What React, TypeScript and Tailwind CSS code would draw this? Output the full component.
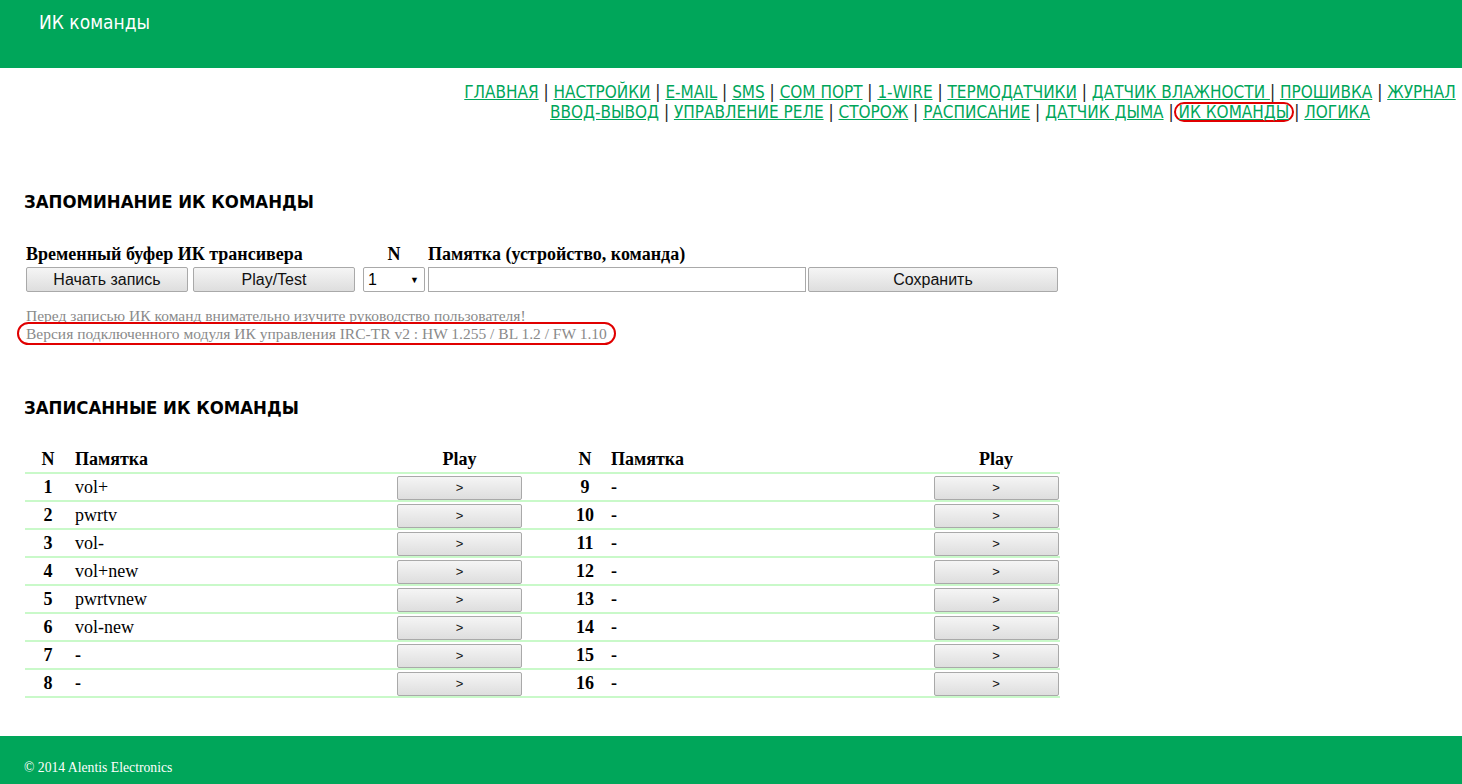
import React from "react";

const GREEN = "bg-[#00a65a]";

const navLine1 = [
  "ГЛАВНАЯ",
  "НАСТРОЙКИ",
  "E-MAIL",
  "SMS",
  "COM ПОРТ",
  "1-WIRE",
  "ТЕРМОДАТЧИКИ",
  "ДАТЧИК ВЛАЖНОСТИ ",
  "ПРОШИВКА",
  "ЖУРНАЛ",
];

const navLine2 = [
  "ВВОД-ВЫВОД",
  "УПРАВЛЕНИЕ РЕЛЕ",
  "СТОРОЖ",
  "РАСПИСАНИЕ",
  "ДАТЧИК ДЫМА",
  "ИК КОМАНДЫ",
  "ЛОГИКА",
];

const commands = ["vol+", "pwrtv", "vol-", "vol+new", "pwrtvnew", "vol-new", "-", "-"];

const tahoma = {
  fontFamily: '"DejaVu Sans Condensed", "DejaVu Sans", sans-serif',
  fontStretch: "condensed",
};

const NavLink = ({ label, circled }: { label: string; circled?: boolean }) => {
  const link = (
    <a href="#" className="text-[#00a65a] underline">
      {label}
    </a>
  );
  if (circled) {
    return (
      <span className="inline-block rounded-full border-2 border-[#e00000] px-[3px] leading-[16px]">
        {link}
      </span>
    );
  }
  return link;
};

const GrayButton = ({
  children,
  className = "",
}: {
  children: React.ReactNode;
  className?: string;
}) => (
  <button
    className={`rounded-[2px] border border-[#a9a9a9] bg-gradient-to-b from-[#f5f5f5] to-[#dedede] text-[#111] font-['Liberation_Sans',Arial,sans-serif] ${className}`}
  >
    {children}
  </button>
);

const Row = ({
  left,
  right,
  head,
}: {
  left: [string, string];
  right: [string, string];
  head?: boolean;
}) => {
  const cell = head ? "font-bold" : "";
  const play = head ? (
    <div className="flex items-center justify-center font-bold">Play</div>
  ) : (
    <div className="flex items-center justify-center">
      <GrayButton className="h-[24px] w-[125px] text-[13px]">&gt;</GrayButton>
    </div>
  );
  return (
    <div className="grid h-[28px] grid-cols-[46px_324px_129px_36px_50px_322px_128px] items-stretch border-b-2 border-[#c9f9c9]">
      <div className="flex items-center justify-center font-bold">{left[0]}</div>
      <div className={`flex items-center pl-[4px] ${cell} ${left[1] === "-" ? "font-bold" : ""}`}>
        {left[1]}
      </div>
      {play}
      <div />
      <div className="flex items-center justify-center font-bold">{right[0]}</div>
      <div className={`flex items-center pl-[1px] ${cell} ${right[1] === "-" ? "font-bold" : ""}`}>
        {right[1]}
      </div>
      {play}
    </div>
  );
};

export default function App() {
  return (
    <div className="min-h-[784px] bg-white font-['Liberation_Serif','Times_New_Roman',serif] text-[18px] text-black">
      <header className={`${GREEN} h-[68px] pl-[39px] pt-[8px]`}>
        <h1 className="text-[19px] leading-[28px] text-white" style={tahoma}>
          ИК команды
        </h1>
      </header>

      <nav className="flex justify-end pt-[14px]">
        <div className="w-[1004px] text-center text-[17px] leading-[20px] text-[#222]" style={tahoma}>
          <div>
            {navLine1.map((l, i) => (
              <React.Fragment key={l}>
                <NavLink label={l} />
                {i < navLine1.length - 1 && <span> | </span>}
              </React.Fragment>
            ))}
          </div>
          <div>
            {navLine2.map((l, i) => (
              <React.Fragment key={l}>
                <NavLink label={l} circled={l === "ИК КОМАНДЫ"} />
                {i < navLine2.length - 1 && (
                  <span>{l === "ДАТЧИК ДЫМА" ? " |" : l === "ИК КОМАНДЫ" ? "| " : " | "}</span>
                )}
              </React.Fragment>
            ))}
          </div>
        </div>
      </nav>

      <main className="pl-[24px]">
        <h2 className="mt-[70px] text-[18.4px] font-bold leading-[20px]" style={tahoma}>
          ЗАПОМИНАНИЕ ИК КОМАНДЫ
        </h2>

        <div className="mt-[32px] flex pl-[2px] text-[18px] font-bold leading-[20px]">
          <div className="w-[337px]">Временный буфер ИК трансивера</div>
          <div className="w-[62px] text-center">N</div>
          <div className="ml-[3px]">Памятка (устройство, команда)</div>
        </div>

        <div className="mt-[3px] flex h-[25px] items-stretch pl-[2px]">
          <GrayButton className="w-[162px] text-[16px]">Начать запись</GrayButton>
          <GrayButton className="ml-[5px] w-[162px] text-[16px]">Play/Test</GrayButton>
          <div className="ml-[8px] flex w-[62px] items-center justify-between rounded-[2px] border border-[#a9a9a9] bg-white pl-[4px] pr-[5px] font-['Liberation_Sans',Arial,sans-serif]">
            <span className="text-[16px] leading-[18px]">1</span>
            <span className="text-[9px] leading-[10px]">▼</span>
          </div>
          <input className="ml-[3px] w-[378px] border border-[#a9a9a9] bg-white outline-none" />
          <GrayButton className="ml-[2px] w-[250px] text-[16px]">Сохранить</GrayButton>
        </div>

        <div className="mt-[15px] text-[15.5px] leading-[17px] text-[#8a8a8a]">
          <div className="pl-[2px]">Перед записью ИК команд внимательно изучите руководство пользователя!</div>
          <div className="-ml-[7px] -mt-[2px]">
            <span className="inline-block rounded-full border-2 border-[#e00000] px-[7px] py-[1px] leading-[17px]">
              Версия подключенного модуля ИК управления IRC-TR v2 : HW 1.255 / BL 1.2 / FW 1.10
            </span>
          </div>
        </div>

        <h2 className="mt-[53px] text-[18.4px] font-bold leading-[20px]" style={tahoma}>
          ЗАПИСАННЫЕ ИК КОМАНДЫ
        </h2>

        <div className="ml-[1px] mt-[28px] w-[1035px]">
          <Row head left={["N", "Памятка"]} right={["N", "Памятка"]} />
          {commands.map((c, i) => (
            <Row key={i} left={[String(i + 1), c]} right={[String(i + 9), "-"]} />
          ))}
        </div>
      </main>

      <footer className={`${GREEN} mt-[38px] h-[48px] pl-[24px] pt-[24px]`}>
        <div className="text-[13.7px] leading-[16px] text-white">© 2014 Alentis Electronics</div>
      </footer>
    </div>
  );
}
